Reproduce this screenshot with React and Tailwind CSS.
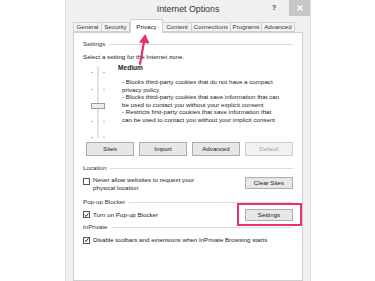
const tabs = [
  { label: 'General', w: 'w-[29px]' },
  { label: 'Security', w: 'w-[29px]' },
  { label: 'Privacy', w: 'w-[33px]', active: true },
  { label: 'Content', w: 'w-[30px]' },
  { label: 'Connections', w: 'w-[40px]' },
  { label: 'Programs', w: 'w-[32px]' },
  { label: 'Advanced', w: 'w-[34px]' },
];

function GroupLabel({ children, className = '' }) {
  return (
    <div className={`flex items-center gap-[4px] h-[8px] leading-[8px] ${className}`}>
      <span className="text-[#333]">{children}</span>
      <div className="flex-1 h-px bg-[#d8dde2]" />
    </div>
  );
}

function Btn({ children, disabled, className = '' }) {
  return (
    <div
      className={`flex items-center justify-center border border-[#adadad] bg-[#e7e7e7] ${
        disabled ? 'text-[#a6a6a6] border-[#cfcfcf] bg-[#f2f2f2]' : 'text-[#222]'
      } ${className}`}
    >
      {children}
    </div>
  );
}

function Check({ checked }) {
  return (
    <div className="w-[7px] h-[7px] shrink-0 border border-[#555] bg-white flex items-center justify-center">
      {checked && (
        <svg width="6" height="6" viewBox="0 0 6 6">
          <path d="M0.8 3.1 L2.4 4.7 L5.3 1.1" fill="none" stroke="#222" strokeWidth="1.2" />
        </svg>
      )}
    </div>
  );
}

function Slider() {
  const ticks = [72, 89, 105, 121, 137];
  return (
    <svg width="24" height="74" viewBox="0 0 24 74" className="shrink-0">
      <rect x="10" y="2" width="2" height="72" fill="#e3e3e3" />
      {ticks.map((t) => (
        <g key={t}>
          <rect x="4" y={t - 64} width="2" height="1" fill="#b8b8b8" />
          <rect x="16" y={t - 64} width="2" height="1" fill="#b8b8b8" />
        </g>
      ))}
      <rect x="4.5" y="39.5" width="13" height="5" fill="#ececec" stroke="#9a9a9a" />
    </svg>
  );
}

export default function App() {
  return (
    <div className="w-[375px] h-[281px] bg-white overflow-hidden relative font-['Liberation_Sans',Arial,sans-serif] text-[6.2px] text-[#222]">
      <div className="ml-[65px] w-[246px] h-[281px] bg-[#f0f0f0] border-x border-[#d9d9d9] flex flex-col">
        <div className="h-[18px] flex items-center relative">
          <div className="flex-1 text-center text-[8.8px] text-[#333] leading-none">Internet Options</div>
          <div className="absolute left-[206px] top-[3px] text-[7px] font-bold text-[#444]">?</div>
          <div className="absolute right-0 top-0 w-[21px] h-[16px] bg-[#c7c7c7] flex items-center justify-center">
            <svg width="6" height="6" viewBox="0 0 6 6">
              <path d="M0.5 0.5 L5.5 5.5 M5.5 0.5 L0.5 5.5" stroke="#fff" strokeWidth="1.2" />
            </svg>
          </div>
        </div>

        <div className="ml-[7px] w-[230px] flex items-end h-[14px] relative z-10">
          {tabs.map((t) =>
            t.active ? (
              <div
                key={t.label}
                className={`${t.w} h-[14px] bg-white border border-b-0 border-[#d0d0d0] flex items-center justify-center -mb-px text-[#222]`}
              >
                {t.label}
              </div>
            ) : (
              <div
                key={t.label}
                className={`${t.w} h-[10px] bg-[#f3f3f3] border border-[#d0d0d0] -ml-px first:ml-0 flex items-center justify-center text-[#333] whitespace-nowrap`}
              >
                {t.label}
              </div>
            )
          )}
        </div>

        <div className="ml-[7px] w-[230px] flex-1 bg-white border border-[#d0d0d0] px-[9px] pt-[7px] flex flex-col">
          <GroupLabel>Settings</GroupLabel>
          <div className="mt-[5px] h-[8px] leading-[8px]">Select a setting for the Internet zone.</div>

          <div className="flex mt-[3px]">
            <div className="ml-[4px]">
              <Slider />
            </div>
            <div className="ml-[7px] flex flex-col">
              <div className="h-[8px] leading-[8px] font-bold text-[6.6px]">Medium</div>
              <div className="mt-[6px] ml-[4px] leading-[7.5px] w-[175px] whitespace-nowrap">
                <div>- Blocks third-party cookies that do not have a compact</div>
                <div>privacy policy</div>
                <div>- Blocks third-party cookies that save information that can</div>
                <div>be used to contact you without your explicit consent</div>
                <div>- Restricts first-party cookies that save information that</div>
                <div>can be used to contact you without your implicit consent</div>
              </div>
            </div>
          </div>

          <div className="flex gap-[5px] ml-[3px] mt-[4px]">
            <Btn className="w-[48px] h-[14px]">Sites</Btn>
            <Btn className="w-[48px] h-[14px]">Import</Btn>
            <Btn className="w-[48px] h-[14px]">Advanced</Btn>
            <Btn className="w-[48px] h-[14px]" disabled>
              Default
            </Btn>
          </div>

          <GroupLabel className="mt-[8px]">Location</GroupLabel>
          <div className="flex items-start justify-between mt-[4px] h-[16px]">
            <div className="flex items-start gap-[3px]">
              <div className="mt-[2px]">
                <Check />
              </div>
              <div className="leading-[8px]">
                <div>Never allow websites to request your</div>
                <div>physical location</div>
              </div>
            </div>
            <Btn className="w-[48px] h-[12px] mt-[1px]">Clear Sites</Btn>
          </div>

          <GroupLabel className="mt-[6px]">Pop-up Blocker</GroupLabel>
          <div className="flex items-center justify-between mt-[3px] h-[12px]">
            <div className="flex items-center gap-[3px]">
              <Check checked />
              <span>Turn on Pop-up Blocker</span>
            </div>
            <div className="relative">
              <Btn className="w-[48px] h-[12px]">Settings</Btn>
              <div className="absolute -left-[8px] -right-[9px] -top-[6px] -bottom-[5px] border-2 border-[#e8336d]" />
            </div>
          </div>

          <GroupLabel className="mt-[2px]">InPrivate</GroupLabel>
          <div className="flex items-center gap-[3px] mt-[5px] h-[8px]">
            <Check checked />
            <span>Disable toolbars and extensions when InPrivate Browsing starts</span>
          </div>
        </div>
      </div>

      <svg className="absolute left-[134px] top-[33px]" width="20" height="34" viewBox="0 0 20 34">
        <path d="M10.5 6 L6 31" stroke="#e5306c" strokeWidth="2.2" strokeLinecap="round" />
        <path d="M11.2 1 L5 9.5 L15.5 10.5 Z" fill="#e5306c" />
      </svg>
    </div>
  );
}
